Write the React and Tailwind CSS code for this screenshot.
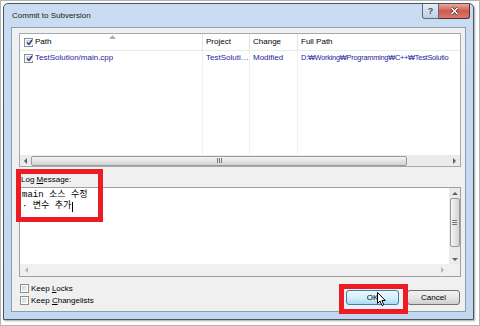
import React from 'react';

function Check({ checked }) {
    return (
        <span className="relative inline-flex w-[9px] h-[9px] shrink-0 border border-[#8e8f8f] bg-white p-[1px]">
            <span className="flex-1 bg-linear-to-br from-[#cfd3d8] to-[#f4f5f6] flex items-center justify-center">
                {checked && (
                    <svg width="7" height="7" viewBox="0 0 7 7">
                        <path d="M1 3.5 L3 5.5 L6 1" stroke="#2a3f8a" strokeWidth="1.4" fill="none" />
                    </svg>
                )}
            </span>
        </span>
    );
}

function Tri({ dir, color = '#4d4d4d' }) {
    const d = {
        left: 'M4 0 L4 6 L1 3 Z',
        right: 'M1 0 L1 6 L4 3 Z',
        up: 'M0 4 L6 4 L3 1 Z',
        down: 'M0 1 L6 1 L3 4 Z',
    }[dir];
    const w = dir === 'left' || dir === 'right' ? 5 : 6;
    const h = dir === 'left' || dir === 'right' ? 6 : 5;
    return (
        <svg width={w} height={h} viewBox={`0 0 ${w} ${h}`}>
            <path d={d} fill={color} />
        </svg>
    );
}

function Button({ children, primary }) {
    return (
        <div
            className={
                primary
                    ? 'w-[53px] h-[15px] rounded-[3px] border border-[#3c7fb1] bg-linear-to-b from-[#eaf6fd] via-[#d9f0fc] to-[#a7d9f5] flex items-center justify-center'
                    : 'w-[53px] h-[15px] rounded-[3px] border border-[#707070] bg-linear-to-b from-[#f2f2f2] via-[#e6e6e6] to-[#cfcfcf] flex items-center justify-center'
            }
        >
            {children}
        </div>
    );
}

export default function App() {
    return (
        <div className="relative w-[480px] h-[326px] bg-white border border-[#b4b4b4] pl-[2px] pt-[2px] overflow-hidden font-['Liberation_Sans',Arial,sans-serif] text-[8px] text-black leading-none">
            <div className="w-[471px] h-[317px] flex flex-col border border-[#4a5564] rounded-t-[5px] bg-linear-to-b from-[#cadcf1] to-[#c2d7ef] shadow-[1px_1px_2px_rgba(0,0,0,0.35)]">
                {/* title bar */}
                <div className="h-[23px] flex shrink-0">
                    <div className="pl-[8px] pt-[8px] text-[8px] text-[#1a1a1a]">Commit to Subversion</div>
                    <div className="ml-auto mr-[3px] flex h-[15px]">
                        <div className="w-[17px] h-[15px] border border-[#5b6b80] border-t-0 rounded-bl-[3px] bg-linear-to-b from-[#e4ecf6] to-[#bfcfe2] flex items-center justify-center text-[9px] font-bold text-[#4a4f57]">
                            ?
                        </div>
                        <div className="w-[31px] h-[15px] border border-[#5a2a2a] border-t-0 border-l-0 rounded-br-[3px] bg-linear-to-b from-[#e9a99f] via-[#cf5a4d] to-[#d67a6c] flex items-center justify-center">
                            <svg width="9" height="8" viewBox="0 0 9 8">
                                <path d="M1.5 1 L7.5 7 M7.5 1 L1.5 7" stroke="#3a1a1a" strokeWidth="2.6" />
                                <path d="M1.5 1 L7.5 7 M7.5 1 L1.5 7" stroke="#fff" strokeWidth="1.6" />
                            </svg>
                        </div>
                    </div>
                </div>

                {/* client area */}
                <div className="flex-1 mx-[7px] mb-[7px] border border-[#8a9db5] bg-[#f0f0f0] pl-[7px] pr-[4px] pt-[5px] flex flex-col">
                    {/* list view */}
                    <div className="h-[134px] border border-[#a3a9b1] bg-white flex flex-col shrink-0">
                        <div className="h-[17px] flex border-b border-[#eaeaea] shrink-0">
                            <div className="w-[183px] relative flex items-center pl-[4px] gap-[2px] border-r border-[#e3e3e3]">
                                <Check checked />
                                <span>Path</span>
                                <span className="absolute left-[89px] top-[1px]">
                                    <svg width="7" height="4" viewBox="0 0 7 4">
                                        <path d="M0 4 L7 4 L3.5 0 Z" fill="#a5b2c3" />
                                    </svg>
                                </span>
                            </div>
                            <div className="w-[47px] flex items-center pl-[3px] border-r border-[#e3e3e3]">Project</div>
                            <div className="w-[48px] flex items-center pl-[3px] border-r border-[#e3e3e3]">Change</div>
                            <div className="flex-1 flex items-center pl-[3px]">Full Path</div>
                        </div>
                        <div className="flex-1 flex text-[#1d1d9e] overflow-hidden">
                            <div className="w-[183px] border-r border-[#f0f0f0] pl-[4px] pt-[2px]">
                                <div className="flex items-center gap-[2px] h-[10px]">
                                    <Check checked />
                                    <span>TestSolution/main.cpp</span>
                                </div>
                            </div>
                            <div className="w-[47px] border-r border-[#f0f0f0] pl-[3px] pt-[2px] overflow-hidden whitespace-nowrap">
                                <div className="h-[10px] flex items-center">TestSoluti…</div>
                            </div>
                            <div className="w-[48px] border-r border-[#f0f0f0] pl-[3px] pt-[2px]">
                                <div className="h-[10px] flex items-center">Modified</div>
                            </div>
                            <div className="flex-1 pl-[3px] pt-[2px] overflow-hidden whitespace-nowrap text-[7.4px] tracking-[-0.25px]">
                                <div className="h-[10px] flex items-center">D:₩Working₩Programming₩C++₩TestSolutio</div>
                            </div>
                        </div>
                        {/* horizontal scrollbar */}
                        <div className="h-[11px] bg-[#ebebeb] flex items-center shrink-0">
                            <div className="w-[11px] flex items-center justify-center">
                                <Tri dir="left" color="#606060" />
                            </div>
                            <div className="w-[376px] h-[10px] rounded-[2px] border border-[#999] bg-linear-to-b from-[#f4f4f4] to-[#d3d3d3] flex items-center justify-center gap-[1px]">
                                <span className="w-px h-[5px] bg-[#777]" />
                                <span className="w-px h-[5px] bg-[#777]" />
                                <span className="w-px h-[5px] bg-[#777]" />
                            </div>
                            <div className="flex-1" />
                            <div className="w-[11px] flex items-center justify-center">
                                <Tri dir="right" color="#606060" />
                            </div>
                        </div>
                    </div>

                    {/* label */}
                    <div className="h-[20px] flex items-end pb-[3px] pl-[2px] shrink-0">
                        <span>
                            Log <span className="underline">M</span>essage:
                        </span>
                    </div>

                    {/* text area */}
                    <div className="h-[90px] border border-[#a0a0a0] bg-white flex flex-col shrink-0">
                        <div className="flex-1 flex">
                            <div className="flex-1 pl-[2px] pt-[2px] font-['Liberation_Mono','Noto_Sans_CJK_KR',monospace] text-[9px] leading-[11px] text-black">
                                <div>main 소스 수정</div>
                                <div className="flex items-center">
                                    <span>· 변수 추가</span>
                                    <span className="w-px h-[10px] bg-black ml-[1px]" />
                                </div>
                            </div>
                            <div className="w-[11px] bg-[#ebebeb] flex flex-col items-center">
                                <div className="h-[10px] flex items-center justify-center">
                                    <Tri dir="up" color="#606060" />
                                </div>
                                <div className="w-[10px] h-[49px] rounded-[2px] border border-[#999] bg-linear-to-r from-[#f4f4f4] to-[#d3d3d3] flex flex-col items-center justify-center gap-[1px]">
                                    <span className="h-px w-[5px] bg-[#777]" />
                                    <span className="h-px w-[5px] bg-[#777]" />
                                    <span className="h-px w-[5px] bg-[#777]" />
                                </div>
                                <div className="flex-1" />
                                <div className="h-[10px] flex items-center justify-center">
                                    <Tri dir="down" color="#606060" />
                                </div>
                            </div>
                        </div>
                        <div className="h-[12px] flex shrink-0">
                            <div className="flex-1 bg-[#f0f0f0] flex items-center justify-between px-[4px]">
                                <Tri dir="left" color="#b5b5b5" />
                                <Tri dir="right" color="#b5b5b5" />
                            </div>
                            <div className="w-[11px] bg-[#f0f0f0]" />
                        </div>
                    </div>

                    {/* bottom */}
                    <div className="flex-1 flex pr-[1px]">
                        <div className="pl-[1px] pt-[7px] flex flex-col gap-[3px]">
                            <div className="flex items-center gap-[2px] h-[9px]">
                                <Check />
                                <span>
                                    Keep <span className="underline">L</span>ocks
                                </span>
                            </div>
                            <div className="flex items-center gap-[2px] h-[9px]">
                                <Check />
                                <span>
                                    Keep <span className="underline">C</span>hangelists
                                </span>
                            </div>
                        </div>
                        <div className="ml-auto pt-[13px] flex gap-[8px]">
                            <Button primary>OK</Button>
                            <Button>Cancel</Button>
                        </div>
                    </div>
                </div>
            </div>

            {/* red highlight boxes */}
            <div className="absolute left-[15px] top-[168px] w-[87px] h-[53px] border-[5px] border-[#ec1c24]" />
            <div className="absolute left-[338px] top-[283px] w-[69px] h-[30px] border-[5px] border-[#ec1c24]" />

            {/* mouse cursor */}
            <svg className="absolute left-[376px] top-[291px]" width="10" height="15" viewBox="0 0 10 15">
                <path d="M0.5 0.5 L0.5 11.5 L3 9 L5 13.5 L6.8 12.7 L4.9 8.5 L8.3 8.5 Z" fill="#fff" stroke="#000" strokeWidth="1" />
            </svg>
        </div>
    );
}
